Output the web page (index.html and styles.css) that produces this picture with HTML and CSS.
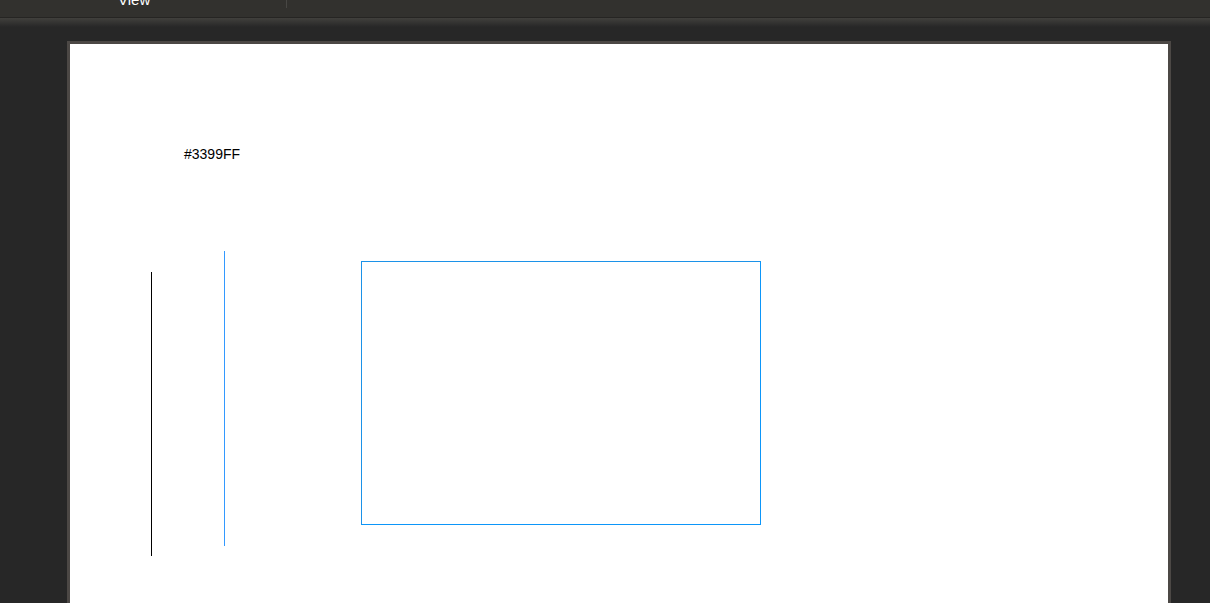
FILE: index.html
```
<!DOCTYPE html>
<html lang="en">
<head>
<meta charset="utf-8">
<title>Canvas</title>
<link rel="stylesheet" href="styles.css">
</head>
<body>
<div class="app">
  <header class="toolbar">
    <button class="menu-button" type="button">View</button>
    <span class="separator"></span>
  </header>
  <main class="workspace">
    <div class="artboard">
      <span class="label">#3399FF</span>
      <div class="line line-black"></div>
      <div class="line line-blue"></div>
      <div class="frame"></div>
    </div>
  </main>
</div>
</body>
</html>
```
FILE: styles.css
```
* { box-sizing: border-box; }
body {
  margin: 0;
  font-family: "Liberation Sans", Arial, sans-serif;
}
.app {
  display: flex;
  flex-direction: column;
  height: 100vh;
  overflow: hidden;
  background: #272727;
}
.toolbar {
  display: flex;
  align-items: flex-end;
  height: 18px;
  padding: 0 118px 9px;
  background: #32312e;
  border-bottom: 1px solid #262523;
}
.menu-button {
  padding: 0;
  border: 0;
  background: none;
  color: #fff;
  font: 15px/16px "Liberation Sans", Arial, sans-serif;
}
.separator {
  width: 1px;
  height: 16px;
  margin-left: 136px;
  background: #484744;
}
.workspace {
  flex: 1;
  display: flex;
  padding: 23px 39px 0 67px;
  background: linear-gradient(#41403d, #272727 9px);
}
.artboard {
  flex: 1;
  position: relative;
  border: 3px solid #4c4845;
  border-bottom: 0;
  background: #fff;
}
.label {
  position: absolute;
  left: 114px;
  top: 102px;
  font-size: 14px;
  line-height: 16px;
  color: #000;
}
.line {
  position: absolute;
  width: 1px;
}
.line-black {
  left: 81px;
  top: 228px;
  height: 284px;
  background: #000;
}
.line-blue {
  left: 154px;
  top: 207px;
  height: 295px;
  background: #39f;
}
.frame {
  position: absolute;
  left: 291px;
  top: 217px;
  width: 400px;
  height: 264px;
  border: 1px solid #0c96f9;
  border-top-color: #1c92e8;
  border-left-color: #1c92e8;
}
```
